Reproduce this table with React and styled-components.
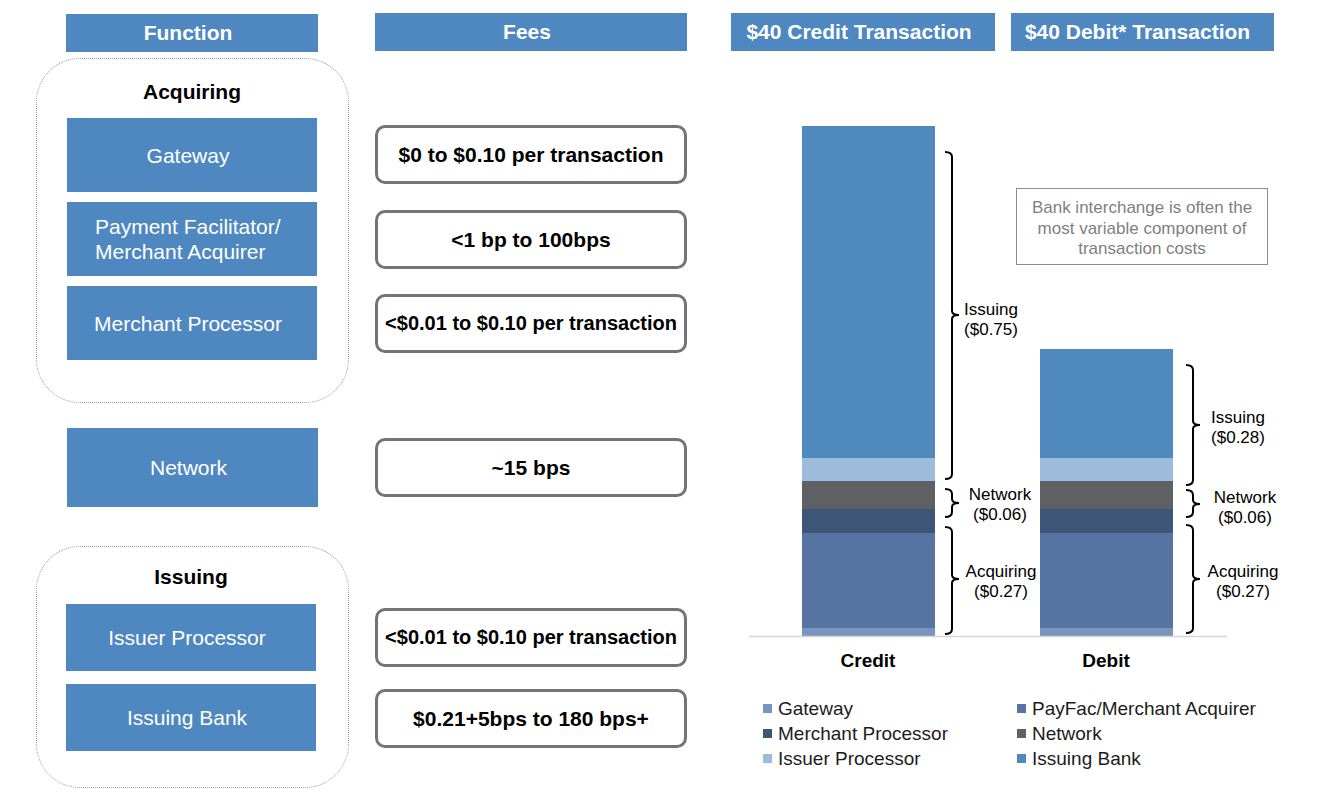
import React from 'react'
import styled, {createGlobalStyle} from 'styled-components'

const GlobalStyle = createGlobalStyle`
  html, body {
    margin: 0;
    padding: 0;
    background: #fff;
    overflow: hidden;
  }
`

const BLUE = '#4f88c0'

const SEGMENTS = {
  gateway: '#7895c0',
  payfac: '#5574a1',
  merchant: '#3d5576',
  network: '#5f6063',
  issuerProc: '#9dbbdb',
  issuingBank: '#4f89be',
}

const Page = styled.div`
  display: flex;
  align-items: flex-start;
  padding: 13px 0 0 36px;
  font-family: "Liberation Sans", Arial, sans-serif;
  color: #000;
`
const FunctionColumn = styled.div`
  width: 313px;
  display: flex;
  flex-direction: column;
`
const HeaderBar = styled.div`
  box-sizing: border-box;
  height: 38px;
  width: ${props => props.$width}px;
  margin: ${props => props.$margin || '0'};
  padding-right: ${props => props.$shift || 0}px;
  background: ${BLUE};
  color: #fff;
  font-size: 21px;
  font-weight: bold;
  display: flex;
  align-items: center;
  justify-content: center;
  white-space: nowrap;
`
const Group = styled.div`
  box-sizing: border-box;
  height: ${props => props.$height}px;
  margin-top: ${props => props.$top}px;
  padding: ${props => props.$pad};
  border: 1px dotted #9a9a9a;
  border-radius: 44px;
  display: flex;
  flex-direction: column;
  gap: ${props => props.$gap}px;
`
const GroupTitle = styled.div`
  height: 28px;
  line-height: 28px;
  margin-bottom: ${props => props.$after - props.$gap}px;
  text-align: center;
  font-size: 21px;
  font-weight: bold;
`
const FunctionBox = styled.div`
  box-sizing: border-box;
  height: ${props => props.$height}px;
  margin: ${props => props.$margin || '0'};
  padding: ${props => (props.$indent ? `0 0 0 ${props.$indent}px` : '0 8px 0 0')};
  background: ${BLUE};
  color: #fff;
  font-size: 21px;
  line-height: 25px;
  display: flex;
  align-items: center;
  justify-content: ${props => (props.$indent ? 'flex-start' : 'center')};
`
const FeesColumn = styled.div`
  width: 312px;
  margin-left: 26px;
  display: flex;
  flex-direction: column;
`
const FeeBox = styled.div`
  box-sizing: border-box;
  height: 59px;
  margin-top: ${props => props.$top}px;
  border: 3px solid #747474;
  border-radius: 10px;
  background: #fff;
  font-size: ${props => props.$size}px;
  font-weight: bold;
  display: flex;
  align-items: center;
  justify-content: center;
  white-space: nowrap;
`
const ChartColumn = styled.div`
  width: 586px;
  margin-left: 44px;
  display: flex;
  flex-direction: column;
`
const HeaderRow = styled.div`
  display: flex;
  gap: 16px;
`
const ChartSvg = styled.svg`
  display: block;
  width: 586px;
  height: 629px;
  font-family: "Liberation Sans", Arial, sans-serif;
`
const Legend = styled.div`
  display: grid;
  grid-template-columns: 254px 254px;
  grid-auto-rows: 25px;
  padding: 16px 0 0 32px;
`
const LegendItem = styled.div`
  display: flex;
  align-items: center;
  font-size: 19px;
  color: #1c1c1c;
  white-space: nowrap;
`
const Swatch = styled.span`
  width: 9px;
  height: 9px;
  margin-right: 6px;
  flex: none;
  background: ${props => props.$color};
`

// right-facing curly bracket beside a bar section
function Brace ({x, y1, y2, tip}) {
  const v = x + 7
  const t = x + 14
  const d = `M ${x} ${y1} Q ${v} ${y1} ${v} ${y1 + 5} L ${v} ${tip - 4} Q ${v} ${tip} ${t} ${tip} Q ${v} ${tip} ${v} ${tip + 4} L ${v} ${y2 - 5} Q ${v} ${y2} ${x} ${y2}`
  return <path d={d} fill="none" stroke="#000" strokeWidth="2" />
}

function Label ({x, y, lines}) {
  return (
    <text x={x} textAnchor="middle" fontSize="17" fill="#000">
      {lines.map((line, i) => (
        <tspan key={i} x={x} y={y + 6 + i * 19.5}>{line}</tspan>
      ))}
    </text>
  )
}

function Bar ({x, top}) {
  const parts = [
    ['issuingBank', top, 458],
    ['issuerProc', 458, 481],
    ['network', 481, 509],
    ['merchant', 509, 533],
    ['payfac', 533, 628],
    ['gateway', 628, 636],
  ]
  return (
    <g>
      {parts.map(([key, a, b]) => (
        <rect key={key} x={x} y={a} width={133} height={b - a} fill={SEGMENTS[key]} />
      ))}
    </g>
  )
}

function Chart () {
  return (
    <ChartSvg viewBox="731 51 586 629">
      <Bar x={802} top={126} />
      <Bar x={1040} top={349} />
      <line x1={749} y1={636.5} x2={1227} y2={636.5} stroke="#d6d6d6" strokeWidth="1.5" />

      <Brace x={945} y1={152} y2={479} tip={315} />
      <Brace x={945} y1={489} y2={517} tip={503} />
      <Brace x={945} y1={527} y2={634} tip={579} />
      <Label x={991} y={309} lines={['Issuing', '($0.75)']} />
      <Label x={1000} y={494} lines={['Network', '($0.06)']} />
      <Label x={1001} y={571} lines={['Acquiring', '($0.27)']} />

      <Brace x={1186} y1={365} y2={485} tip={425} />
      <Brace x={1186} y1={490} y2={517} tip={504} />
      <Brace x={1186} y1={525} y2={633} tip={579} />
      <Label x={1238} y={417} lines={['Issuing', '($0.28)']} />
      <Label x={1245} y={497} lines={['Network', '($0.06)']} />
      <Label x={1243} y={571} lines={['Acquiring', '($0.27)']} />

      <rect x={1016.5} y={188.5} width={251} height={76} fill="#fff" stroke="#8c8c8c" strokeWidth="1" />
      <text textAnchor="middle" fontSize="17" fill="#7f7f7f">
        <tspan x={1142} y={213}>Bank interchange is often the</tspan>
        <tspan x={1142} y={234}>most variable component of</tspan>
        <tspan x={1142} y={254}>transaction costs</tspan>
      </text>

      <text x={868} y={667} textAnchor="middle" fontSize="19" fontWeight="bold">Credit</text>
      <text x={1106} y={667} textAnchor="middle" fontSize="19" fontWeight="bold">Debit</text>
    </ChartSvg>
  )
}

const legendItems = [
  ['Gateway', SEGMENTS.gateway],
  ['PayFac/Merchant Acquirer', SEGMENTS.payfac],
  ['Merchant Processor', SEGMENTS.merchant],
  ['Network', SEGMENTS.network],
  ['Issuer Processor', SEGMENTS.issuerProc],
  ['Issuing Bank', SEGMENTS.issuingBank],
]

function App () {
  return (
    <>
      <GlobalStyle />
      <Page>
        <FunctionColumn>
          <HeaderBar $width={252} $margin="1px 0 0 30px" $shift={8}>Function</HeaderBar>
          <Group $height={345} $top={6} $pad="19px 31px 0 30px" $gap={10}>
            <GroupTitle $after={12} $gap={10}>Acquiring</GroupTitle>
            <FunctionBox $height={74}>Gateway</FunctionBox>
            <FunctionBox $height={74} $indent={28}>Payment Facilitator/<br />Merchant Acquirer</FunctionBox>
            <FunctionBox $height={74}>Merchant Processor</FunctionBox>
          </Group>
          <FunctionBox $height={79} $margin="25px 31px 0 31px">Network</FunctionBox>
          <Group $height={242} $top={39} $pad="16px 32px 0 29px" $gap={13}>
            <GroupTitle $after={13} $gap={13}>Issuing</GroupTitle>
            <FunctionBox $height={67}>Issuer Processor</FunctionBox>
            <FunctionBox $height={67}>Issuing Bank</FunctionBox>
          </Group>
        </FunctionColumn>

        <FeesColumn>
          <HeaderBar $width={312} $shift={8}>Fees</HeaderBar>
          <FeeBox $top={74} $size={21}>$0 to $0.10 per transaction</FeeBox>
          <FeeBox $top={26} $size={21}>&lt;1 bp to 100bps</FeeBox>
          <FeeBox $top={25} $size={20}>&lt;$0.01 to $0.10 per transaction</FeeBox>
          <FeeBox $top={85} $size={21}>~15 bps</FeeBox>
          <FeeBox $top={111} $size={20}>&lt;$0.01 to $0.10 per transaction</FeeBox>
          <FeeBox $top={22} $size={21}>$0.21+5bps to 180 bps+</FeeBox>
        </FeesColumn>

        <ChartColumn>
          <HeaderRow>
            <HeaderBar $width={264} $shift={8}>$40 Credit Transaction</HeaderBar>
            <HeaderBar $width={263} $shift={10}>$40 Debit* Transaction</HeaderBar>
          </HeaderRow>
          <Chart />
          <Legend>
            {legendItems.map(([name, color]) => (
              <LegendItem key={name}><Swatch $color={color} />{name}</LegendItem>
            ))}
          </Legend>
        </ChartColumn>
      </Page>
    </>
  )
}

export default App
